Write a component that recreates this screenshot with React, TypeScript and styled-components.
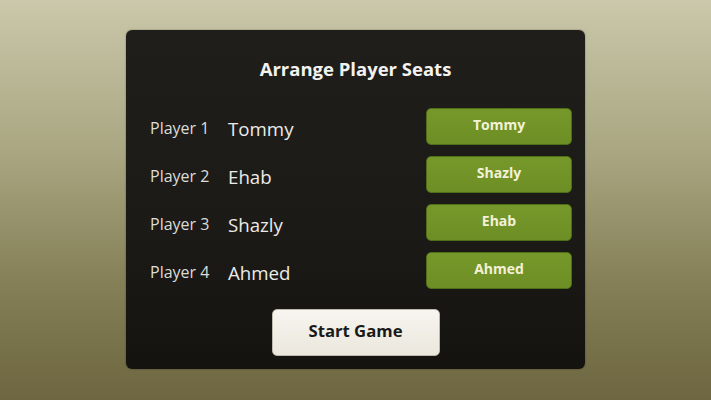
import styled, { createGlobalStyle } from "styled-components";

const GlobalStyle = createGlobalStyle`
  html, body {
    margin: 0;
    padding: 0;
  }
  body {
    font-family: "Open Sans", "Noto Sans", "DejaVu Sans", sans-serif;
  }
`;

const Screen = styled.div`
  width: 711px;
  height: 400px;
  box-sizing: border-box;
  padding-top: 30px;
  display: flex;
  justify-content: center;
  align-items: flex-start;
  background: linear-gradient(to bottom, #cbc8ab 0%, #a7a47f 40%, #858057 70%, #6d6640 100%);
`;

const Panel = styled.div`
  width: 459px;
  height: 339px;
  box-sizing: border-box;
  padding: 27px 13px 13px 24px;
  border-radius: 6px;
  background: linear-gradient(to bottom, #1f1e1b 0%, #1b1a16 60%, #15130f 100%);
  box-shadow: 0 0 2px rgba(0, 0, 0, 0.4);
  display: flex;
  flex-direction: column;
`;

const Title = styled.h1`
  margin: 0 0 27px 0;
  padding-right: 11px;
  height: 24px;
  line-height: 24px;
  text-align: center;
  font-size: 18.5px;
  font-weight: 700;
  color: #f2f2f0;
`;

const SeatList = styled.div`
  display: flex;
  flex-direction: column;
  gap: 12px;
`;

const Row = styled.div`
  display: flex;
  align-items: center;
  height: 36px;
`;

const SeatLabel = styled.span`
  width: 78px;
  font-size: 16px;
  color: #dcdcd8;
  padding-top: 4px;
`;

const PlayerName = styled.span`
  flex: 1;
  font-size: 18.7px;
  color: #ecebe8;
  padding-top: 4px;
`;

const SeatButton = styled.button`
  width: 146px;
  height: 37px;
  border: 1px solid #506d17;
  border-radius: 5px;
  background: linear-gradient(to bottom, #76982b 0%, #6c8e24 100%);
  color: #f4f1d8;
  font-family: inherit;
  font-size: 14px;
  font-weight: 700;
  padding: 0 0 3px 0;
  cursor: pointer;
`;

const StartButton = styled.button`
  align-self: center;
  margin: 21px 11px 0 0;
  width: 168px;
  height: 48px;
  border: 1px solid #bdb9ad;
  border-radius: 5px;
  background: linear-gradient(to bottom, #f7f5f0 0%, #ebe7dd 100%);
  color: #1a1a18;
  font-family: inherit;
  font-size: 16.7px;
  font-weight: 700;
  padding: 0 0 4px 0;
  cursor: pointer;
`;

const seats = [
  { seat: "Player 1", name: "Tommy", assigned: "Tommy" },
  { seat: "Player 2", name: "Ehab", assigned: "Shazly" },
  { seat: "Player 3", name: "Shazly", assigned: "Ehab" },
  { seat: "Player 4", name: "Ahmed", assigned: "Ahmed" },
];

export default function App() {
  return (
    <>
      <GlobalStyle />
      <Screen>
        <Panel>
          <Title>Arrange Player Seats</Title>
          <SeatList>
            {seats.map((s) => (
              <Row key={s.seat}>
                <SeatLabel>{s.seat}</SeatLabel>
                <PlayerName>{s.name}</PlayerName>
                <SeatButton>{s.assigned}</SeatButton>
              </Row>
            ))}
          </SeatList>
          <StartButton>Start Game</StartButton>
        </Panel>
      </Screen>
    </>
  );
}
